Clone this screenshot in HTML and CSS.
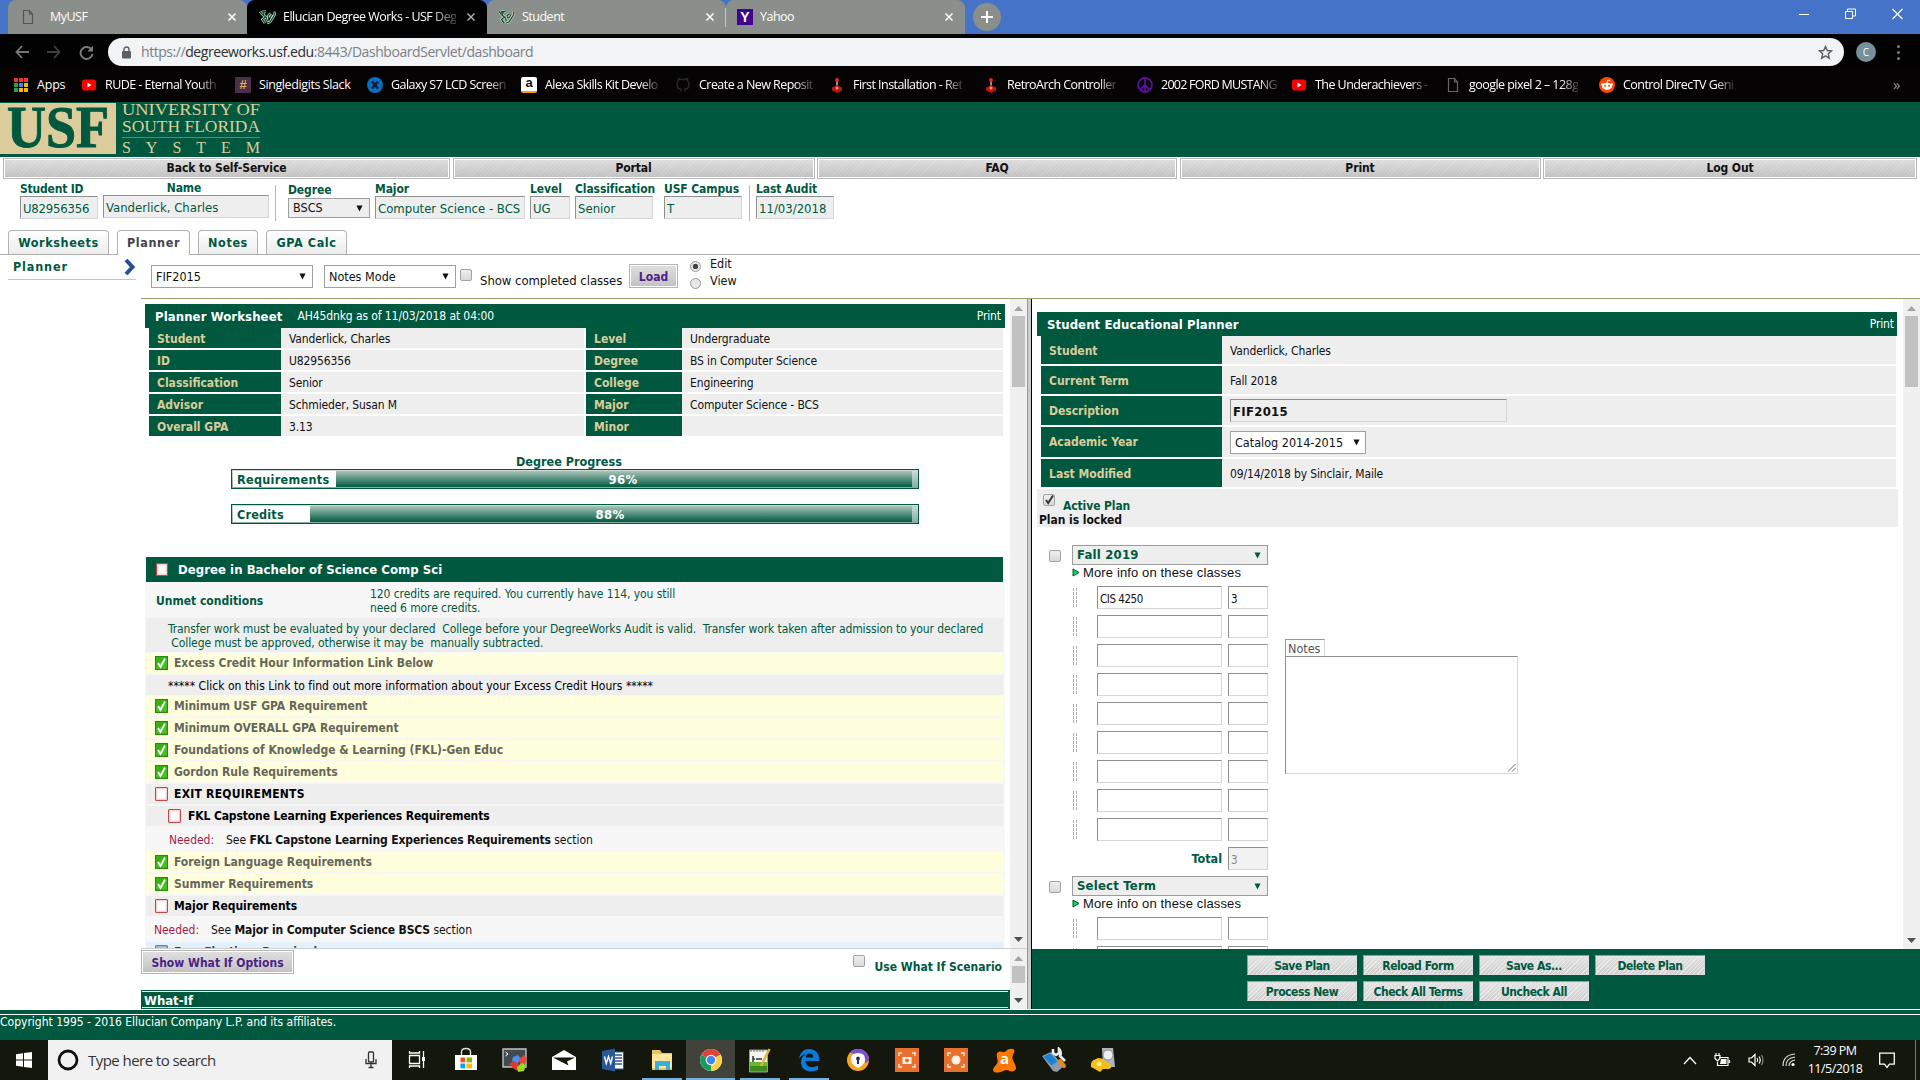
FILE: index.html
```html
<!DOCTYPE html>
<html lang="en">
<head>
<meta charset="utf-8">
<title>Ellucian Degree Works</title>
<link rel="stylesheet" href="styles.css">
</head>
<body>
<svg class="defs" width="0" height="0">
  <symbol id="bull" viewBox="0 0 17 16"><path d="M1 2.500l2.500 3M3 3l4-.5M5.500 3L4 6l2.500 2L3.500 10.500 6 14M7 8l1.500 4M8 14l3-1 4.500-7L16 2.500M10 9l-1-2 2.500-2.500M13 5.500L11 9" fill="none" stroke="#d6dccb" stroke-width="2.600"/><path d="M1 2.500l2.500 3M3 3l4-.5M5.500 3L4 6l2.500 2L3.500 10.500 6 14M7 8l1.500 4M8 14l3-1 4.500-7L16 2.500M10 9l-1-2 2.500-2.500M13 5.500L11 9" fill="none" stroke="#0b4f30" stroke-width="1.300"/></symbol>
  <symbol id="x" viewBox="0 0 10 10"><path d="M1.500 1.500l7 7M8.500 1.500l-7 7" stroke="currentColor" stroke-width="1.500"/></symbol>
  <symbol id="page" viewBox="0 0 12 16"><path d="M1.500 1.500h6l3 3.500v9.500h-9zM7.500 1.500V5h3" fill="none" stroke="currentColor" stroke-width="1.200"/></symbol>
  <symbol id="yt" viewBox="0 0 16 16"><rect x="1" y="2.500" width="14" height="11" rx="2.500" fill="#f00"/><path d="M6.500 5.500L10.500 8l-4 2.500z" fill="#fff"/></symbol>
  <symbol id="stick" viewBox="0 0 16 16"><path d="M8 4v6" stroke="#bbb" stroke-width="1.500"/><circle cx="8" cy="3" r="2" fill="#e22"/><path d="M3 10.500L8 8l5 2.500v3L8 16l-5-2.500z" fill="#b3161b"/><circle cx="8" cy="11" r="1.500" fill="#f0a030"/></symbol>
  <symbol id="ok" viewBox="0 0 13 14"><rect x=".5" y=".5" width="12" height="13" fill="#37b013" stroke="#268a0b"/><path d="M1.500 8L11.500 3v9.500h-10z" fill="#57c936" opacity=".6"/><path d="M3 7l2.500 4L10 2.500" fill="none" stroke="#fff" stroke-width="1.800"/></symbol>
  <symbol id="down" viewBox="0 0 8 7"><path d="M.5 0h7L4 7z" fill="currentColor"/></symbol>
  <symbol id="tri" viewBox="0 0 9 5"><path d="M4.500 0L9 5H0z" fill="currentColor"/></symbol>
</svg>

<div class="tabstrip">
  <div class="tab t1"><svg width="12" height="16" color="#555"><use href="#page"/></svg><span>MyUSF</span><svg class="cl" width="10" height="10"><use href="#x"/></svg></div>
  <div class="tab t2"><svg width="17" height="16"><use href="#bull"/></svg><span class="fade">Ellucian Degree Works - USF Deg</span><svg class="cl" width="10" height="10"><use href="#x"/></svg></div>
  <div class="tab t3"><svg width="17" height="16"><use href="#bull"/></svg><span>Student</span><svg class="cl" width="10" height="10"><use href="#x"/></svg></div>
  <div class="tab t4"><b class="yahoo">Y</b><span>Yahoo</span><svg class="cl" width="10" height="10"><use href="#x"/></svg></div>
  <div class="newtab"><svg width="14" height="14"><path d="M7 1v12M1 7h12" stroke="#fff" stroke-width="2"/></svg></div>
  <div class="winbtns">
    <svg width="10" height="12"><path d="M0 6.500h10" stroke="#fff"/></svg>
    <svg width="11" height="12"><path d="M.5 3.500h7v7h-7zM2.500 3V1h8v7H8" fill="none" stroke="#fff"/></svg>
    <svg width="11" height="12"><path d="M.5 1l10 10M10.500 1l-10 10" stroke="#fff" stroke-width="1.200"/></svg>
  </div>
</div>

<div class="toolbar">
  <svg width="14" height="14"><path d="M14 7H1.500M7 1L1.500 7 7 13" fill="none" stroke="#74777a" stroke-width="1.800"/></svg>
  <svg class="fwd" width="14" height="14"><path d="M0 7h12.500M7 1l5.500 6L7 13" fill="none" stroke="#3d3f41" stroke-width="1.800"/></svg>
  <svg class="rel" width="15" height="15"><path d="M12.500 4.500A6 6 0 1 0 13.500 9" fill="none" stroke="#7b7e81" stroke-width="1.900"/><path d="M14 .8v5.700H8.300z" fill="#7b7e81"/></svg>
  <div class="omni">
    <svg width="9" height="13"><rect x="0" y="5" width="9" height="7.500" rx="1" fill="#5b5f63"/><path d="M2 5V3.500a2.500 2.500 0 0 1 5 0V5" fill="none" stroke="#5b5f63" stroke-width="1.400"/></svg>
    <span class="url">https://<em>degreeworks.usf.edu</em>:8443/DashboardServlet/dashboard</span>
    <svg class="star" width="15" height="15"><path d="M7.500 1.500l1.800 4 4.200.4-3.200 2.900 1 4.400-3.800-2.300-3.800 2.300 1-4.400L1.500 5.900l4.200-.4z" fill="none" stroke="#5b5f63" stroke-width="1.400"/></svg>
  </div>
  <div class="avatar">C</div>
  <div class="dots"><i></i><i></i><i></i></div>
</div>

<div class="bookmarks">
  <div class="bm apps"><svg width="14" height="14"><path d="M0 0h4v4H0zM5 0h4v4H5zM10 0h4v4h-4z" fill="#e8392d"/><path d="M0 5h4v4H0z" fill="#2e9e4f"/><path d="M5 5h4v4H5z" fill="#3b82f0"/><path d="M10 5h4v4h-4z" fill="#f5b60d"/><path d="M0 10h4v4H0z" fill="#2e9e4f"/><path d="M5 10h4v4H5zM10 10h4v4h-4z" fill="#f5b60d"/></svg><span>Apps</span></div>
  <div class="bm"><svg width="16" height="16"><use href="#yt"/></svg><span>RUDE - Eternal Youth</span></div>
  <div class="bm short"><b class="hash">#</b><span>Singledigits Slack</span></div>
  <div class="bm"><svg width="16" height="16"><circle cx="8" cy="8" r="8" fill="#0a6ebd"/><path d="M5 4.500l6 7M11 4.500l-6 7" stroke="#06203c" stroke-width="2.600"/></svg><span>Galaxy S7 LCD Screen</span></div>
  <div class="bm"><b class="amz">a</b><span>Alexa Skills Kit Develo</span></div>
  <div class="bm"><svg width="16" height="16"><path d="M6 14.500V12C3 12 2 9.500 2 7.500S3 4 3.500 3.500V1.500L6 2.500h4l2.500-1v2C13 4 14 5.500 14 7.500S13 12 10 12v2.500" fill="none" stroke="#26282b" stroke-width="1.500"/></svg><span>Create a New Reposit</span></div>
  <div class="bm"><svg width="16" height="16"><use href="#stick"/></svg><span>First Installation - Ret</span></div>
  <div class="bm"><svg width="16" height="16"><use href="#stick"/></svg><span>RetroArch Controller</span></div>
  <div class="bm"><svg width="16" height="16"><circle cx="8" cy="8" r="7" fill="none" stroke="#5b0f9b" stroke-width="1.800"/><path d="M8 1v14M8 8l-5 5M8 8l5 5" stroke="#5b0f9b" stroke-width="1.800"/></svg><span class="tight">2002 FORD MUSTANG</span></div>
  <div class="bm"><svg width="16" height="16"><use href="#yt"/></svg><span>The Underachievers -</span></div>
  <div class="bm"><svg width="16" height="16" color="#666"><use href="#page"/></svg><span>google pixel 2 – 128g</span></div>
  <div class="bm"><svg width="16" height="16"><circle cx="8" cy="8" r="8" fill="#ff4500"/><ellipse cx="8" cy="9.300" rx="5" ry="3.600" fill="#fff"/><circle cx="3.500" cy="7.500" r="1.300" fill="#fff"/><circle cx="12.500" cy="7.500" r="1.300" fill="#fff"/><path d="M8 6l.7-3 2.300.5" fill="none" stroke="#fff"/><circle cx="6" cy="8.800" r="1" fill="#ff4500"/><circle cx="10" cy="8.800" r="1" fill="#ff4500"/></svg><span>Control DirecTV Geni</span></div>
  <div class="more">»</div>
</div>

<div class="banner">
  <svg width="262" height="55" class="logo">
    <rect x="0" y="1" width="116" height="51" fill="#dccc9b"/>
    <text x="7" y="45" textLength="102" lengthAdjust="spacingAndGlyphs" font-size="59" font-weight="bold" fill="#00593f" stroke="#00593f">USF</text>
    <g fill="#dccc9b" font-size="17.500">
      <text x="122" y="13" textLength="138" lengthAdjust="spacingAndGlyphs">UNIVERSITY OF</text>
      <text x="122" y="30" textLength="138" lengthAdjust="spacingAndGlyphs">SOUTH FLORIDA</text>
      <text x="122" y="51" font-size="16" textLength="138">SYSTEM</text>
    </g>
    <path d="M122 35.500h138" stroke="#5c8b62"/>
  </svg>
</div>

<div class="menubar"><a class="stripe">Back to Self-Service</a><a class="stripe">Portal</a><a class="stripe">FAQ</a><a class="stripe">Print</a><a class="stripe">Log Out</a></div>

<div class="student">
  <div class="f f-id"><label>Student ID</label><div class="in">U82956356</div></div>
  <div class="f f-name"><label>Name</label><div class="in">Vanderlick, Charles</div></div>
  <div class="rule"></div>
  <div class="f f-deg"><label>Degree</label><div class="sel">BSCS<svg width="7" height="7"><use href="#down"/></svg></div></div>
  <div class="f f-maj"><label>Major</label><div class="in">Computer Science - BCS</div></div>
  <div class="f f-lev"><label>Level</label><div class="in">UG</div></div>
  <div class="f f-cls"><label>Classification</label><div class="in">Senior</div></div>
  <div class="f f-cam"><label>USF Campus</label><div class="in">T</div></div>
  <div class="rule r2"></div>
  <div class="f f-aud"><label>Last Audit</label><div class="in">11/03/2018</div></div>
</div>

<div class="apptabs"><a class="w1">Worksheets</a><a class="w2 on">Planner</a><a class="w3">Notes</a><a class="w4">GPA Calc</a></div>

<div class="work">
  <div class="side"><div class="sideitem"><span>Planner</span><svg width="12" height="16"><path d="M2 1l6.500 7L2 15" fill="none" stroke="#26508f" stroke-width="4"/></svg></div></div>
  <div class="content">
    <div class="controls">
      <div class="sel s1">FIF2015<svg width="7" height="7"><use href="#down"/></svg></div>
      <div class="sel s2">Notes Mode<svg width="7" height="7"><use href="#down"/></svg></div>
      <i class="cb"></i><span class="scc">Show completed classes</span>
      <a class="btn stripe load">Load</a>
      <div class="radios"><div><i class="rad on"></i>Edit</div><div><i class="rad"></i>View</div></div>
    </div>
    <div class="frames">
      <div class="leftcol">
        <div class="ws">
          <div class="wsbody">
            <div class="bar"><b>Planner Worksheet</b><span>AH45dnkg as of 11/03/2018 at 04:00</span><span class="pr">Print</span></div>
            <div class="info">
              <b>Student</b><span>Vanderlick, Charles</span><b>Level</b><span>Undergraduate</span>
              <b>ID</b><span>U82956356</span><b>Degree</b><span>BS in Computer Science</span>
              <b>Classification</b><span>Senior</span><b>College</b><span>Engineering</span>
              <b>Advisor</b><span>Schmieder, Susan M</span><b>Major</b><span>Computer Science - BCS</span>
              <b>Overall GPA</b><span>3.13</span><b>Minor</b><span></span>
            </div>
            <div class="dp">Degree Progress</div>
            <div class="prog"><span class="pl req">Requirements</span><span class="pf">96%</span></div>
            <div class="prog"><span class="pl crd">Credits</span><span class="pf">88%</span></div>
            <div class="audit">
              <div class="ah"><i class="no"></i>Degree in Bachelor of Science Comp Sci</div>
              <div class="unmet"><b>Unmet conditions</b><p>120 credits are required. You currently have 114, you still<br>need 6 more credits.</p></div>
              <div class="transfer">Transfer work must be evaluated by your declared&nbsp; College before your DegreeWorks Audit is valid.&nbsp; Transfer work taken after admission to your declared<br>&nbsp;College must be approved, otherwise it may be&nbsp; manually subtracted.</div>
              <div class="row y"><svg><use href="#ok"/></svg>Excess Credit Hour Information Link Below</div>
              <div class="row g link">***** Click on this Link to find out more information about your Excess Credit Hours *****</div>
              <div class="row y n1"><svg><use href="#ok"/></svg>Minimum USF GPA Requirement</div>
              <div class="row y"><svg><use href="#ok"/></svg>Minimum OVERALL GPA Requirement</div>
              <div class="row y"><svg><use href="#ok"/></svg>Foundations of Knowledge &amp; Learning (FKL)-Gen Educ</div>
              <div class="row y"><svg><use href="#ok"/></svg>Gordon Rule Requirements</div>
              <div class="row g wide"><i class="no"></i>EXIT REQUIREMENTS</div>
              <div class="row g sub"><i class="no"></i>FKL Capstone Learning Experiences Requirements</div>
              <div class="need n2"><em>Needed:</em>See&nbsp;<b>FKL Capstone Learning Experiences Requirements</b>&nbsp;section</div>
              <div class="row y n0"><svg><use href="#ok"/></svg>Foreign Language Requirements</div>
              <div class="row y"><svg><use href="#ok"/></svg>Summer Requirements</div>
              <div class="row g"><i class="no"></i>Major Requirements</div>
              <div class="need"><em>Needed:</em>See&nbsp;<b>Major in Computer Science BSCS</b>&nbsp;section</div>
              <div class="row bl"><i class="no ip"></i>Free Electives Required</div>
            </div>
          </div>
          <div class="sb"><svg width="9" height="5" color="#a3a3a3"><use href="#tri"/></svg><i class="th"></i><svg class="dn" width="9" height="5" color="#505050"><use href="#tri"/></svg></div>
        </div>
        <div class="whatif">
          <div class="wibody">
            <div class="witop"><a class="btn stripe">Show What If Options</a><span class="usew"><i class="cb"></i>Use What If Scenario</span></div>
            <div class="wibar">What-If</div>
          </div>
          <div class="sb"><svg width="9" height="5" color="#a3a3a3"><use href="#tri"/></svg><i class="th small"></i><svg class="dn" width="9" height="5" color="#505050"><use href="#tri"/></svg></div>
        </div>
      </div>
      <div class="split"></div>
      <div class="rightcol">
        <div class="pl-wrap">
          <div class="planner">
            <div class="bar"><b>Student Educational Planner</b><span class="pr">Print</span></div>
            <div class="pinfo">
              <b>Student</b><span>Vanderlick, Charles</span>
              <b>Current Term</b><span>Fall 2018</span>
              <b>Description</b><span><i class="in desc">FIF2015</i></span>
              <b>Academic Year</b><span><i class="sel cat">Catalog 2014-2015<svg width="7" height="7"><use href="#down"/></svg></i></span>
              <b>Last Modified</b><span>09/14/2018 by Sinclair, Maile</span>
            </div>
            <div class="active"><div><i class="cb ck"><svg width="12" height="12"><path d="M3 6l2.200 3L10 1.500" fill="none" stroke="#333" stroke-width="2"/></svg></i><b>Active Plan</b></div><strong>Plan is locked</strong></div>
            <div class="term">
              <i class="cb"></i>
              <div class="tcol">
                <div class="tsel">Fall 2019<svg width="7" height="7"><use href="#down"/></svg></div>
                <div class="mi"><svg width="8" height="9"><path d="M1 1l6 3.500L1 8z" fill="#00e060" stroke="#04502c"/></svg>More info on these classes</div>
                <div class="cr"><i></i><u>CIS 4250</u><u>3</u></div>
                <div class="cr"><i></i><u></u><u></u></div>
                <div class="cr"><i></i><u></u><u></u></div>
                <div class="cr"><i></i><u></u><u></u></div>
                <div class="cr"><i></i><u></u><u></u></div>
                <div class="cr"><i></i><u></u><u></u></div>
                <div class="cr"><i></i><u></u><u></u></div>
                <div class="cr"><i></i><u></u><u></u></div>
                <div class="cr"><i></i><u></u><u></u></div>
                <div class="cr tot"><b>Total</b><u class="dis">3</u></div>
              </div>
              <div class="notes"><span>Notes</span><div class="ta"><svg width="9" height="9"><path d="M1 8.500L8.500 1M5 8.500L8.500 5" stroke="#555" stroke-width=".9"/></svg></div></div>
            </div>
            <div class="term t-2">
              <i class="cb"></i>
              <div class="tcol">
                <div class="tsel">Select Term<svg width="7" height="7"><use href="#down"/></svg></div>
                <div class="mi"><svg width="8" height="9"><path d="M1 1l6 3.500L1 8z" fill="#00e060" stroke="#04502c"/></svg>More info on these classes</div>
                <div class="cr"><i></i><u></u><u></u></div>
                <div class="cr"><i></i><u></u><u></u></div>
              </div>
            </div>
          </div>
          <div class="sb"><svg width="9" height="5" color="#a3a3a3"><use href="#tri"/></svg><i class="th"></i><svg class="dn" width="9" height="5" color="#505050"><use href="#tri"/></svg></div>
        </div>
        <div class="actions">
          <a class="stripe">Save Plan</a><a class="stripe">Reload Form</a><a class="stripe">Save As...</a><a class="stripe">Delete Plan</a>
          <a class="stripe">Process New</a><a class="stripe">Check All Terms</a><a class="stripe">Uncheck All</a>
        </div>
      </div>
    </div>
  </div>
</div>

<div class="foot"><div></div><p>Copyright 1995 - 2016 Ellucian Company L.P. and its affiliates.</p></div>

<div class="taskbar">
  <div class="start"><svg width="16" height="16"><path d="M0 2.200l7-1v6.300H0zM8 1l8-1v7.500H8zM0 8.500h7v6.300l-7-1zM8 8.500h8V16l-8-1z" fill="#fff"/></svg></div>
  <div class="search"><svg width="22" height="22"><circle cx="11" cy="11" r="9" fill="none" stroke="#111" stroke-width="2.800"/></svg><span>Type here to search</span><svg class="mic" width="12" height="18"><rect x="3.500" y="1" width="5" height="10" rx="1" fill="none" stroke="#333" stroke-width="1.300"/><path d="M1 8v4.500h10V8M6 12.500V16M3.500 16.500h5" fill="none" stroke="#333" stroke-width="1.300"/></svg></div>
  <div class="ti"><svg width="18" height="18"><path d="M1.500 4.500h10v8h-10zM1.500 0v2h10V0M1.500 17v-2h10v2M15.500 0v17" fill="none" stroke="#fff" stroke-width="1.300"/><path d="M14 6h3v4h-3z" fill="#fff"/></svg></div>
  <div class="ti"><svg width="24" height="26"><path d="M1 8h22v15H1z" fill="#fff"/><path d="M7.500 8V5q0-3.500 4.500-3.500T16.500 5v3" fill="none" stroke="#ddd" stroke-width="1.400"/><path d="M6.500 10.500H11v4.800H6.500z" fill="#f25022"/><path d="M12.500 10.500H18v4.800h-5.500z" fill="#7fba00"/><path d="M6.500 16.500H11v4.800H6.500z" fill="#00a4ef"/><path d="M12.500 16.500H18v4.800h-5.500z" fill="#ffb900"/></svg></div>
  <div class="ti"><svg width="26" height="26"><path d="M1 2h23v18H1z" fill="#444b50" stroke="#bfc3c6" stroke-width="1.400"/><path d="M3.500 5l2.500 2-2.500 2" stroke="#fff" fill="none"/><path d="M11 10l5-2 3 4-4 5-5-3z" fill="#4a8ef0"/><path d="M17 12l5-4 3 4-2 5-5 0z" fill="#e64a3b"/><path d="M7 17l5-3 5 3-1 7-4-2z" fill="#e0392c"/><path d="M15 20l5-4 4 2-2 6-6 1z" fill="#9bd822"/></svg></div>
  <div class="ti"><svg width="26" height="22"><path d="M1 8L13 1l12 7v13H1z" fill="#fff"/><path d="M2 8.500h22l-8 4 1.500 4L2 8.500z" fill="#14170b"/></svg></div>
  <div class="ti"><svg width="24" height="24"><path d="M12 4h10.500v17H12z" fill="#fff" stroke="#2b579a"/><path d="M14 7h7M14 10h7M14 13h7M14 16h7" stroke="#2b579a" stroke-width="1.300"/><path d="M1 3l13-2.500v23L1 21z" fill="#2b579a"/><path d="M3.500 8.500L5.300 15.500 7.500 8.500l2.200 7 1.800-7" fill="none" stroke="#fff" stroke-width="1.400"/></svg></div>
  <div class="ti run"><svg width="24" height="22"><path d="M2 1h8l2 3h10v17H2z" fill="#e9c35c"/><path d="M2 5h20v14H2z" fill="#ffe69a"/><path d="M5 21v-9h15v9h-4v-4H9v4z" fill="#38aee6"/></svg></div>
  <div class="ti run cur"><svg width="24" height="24" viewBox="0 0 24 24"><circle cx="12" cy="12" r="11" fill="#fff"/><path d="M12 12L2.500 6.500A11 11 0 0 1 21.500 6.500z" fill="#db4437"/><path d="M12 12l9.500-5.500A11 11 0 0 1 12 23z" fill="#fdd04a"/><path d="M12 12v11A11 11 0 0 1 2.500 6.500z" fill="#1a9d5a"/><circle cx="12" cy="12" r="5.300" fill="#fff"/><circle cx="12" cy="12" r="4.200" fill="#4285f4"/></svg></div>
  <div class="ti run"><svg width="24" height="25"><path d="M1.500 2h18v22h-18z" fill="#f4f6f2" stroke="#999"/><path d="M2 14h17v9.500H2z" fill="#6db52f"/><path d="M2 18h17v5.500H2z" fill="#3f8a1c"/><path d="M5 8v6M8 11h6M5 11h2" stroke="#333" stroke-width="1.500"/><path d="M21.500 1L13 18" stroke="#e8b13c" stroke-width="2.500"/><path d="M3 2v2M6 2v2M9 2v2M12 2v2M15 2v2" stroke="#777"/></svg></div>
  <div class="ti run"><svg width="22" height="24"><path d="M1 11C2 4 6 1 11 1c6 0 10 4 10 9v3H7.500c.3 4 3 6 6.500 6 2.500 0 4.500-.6 6-1.500v4.300C18 23 15.500 23.500 13 23.500 7 23.500 3 20 3 14c0-3.500 2-6.500 5-8C4.500 6.500 2 8.500 1 11zM7.700 9.500h7.500c0-2.500-1.200-4-3.600-4S8 7.200 7.700 9.500z" fill="#0a7bdc"/></svg></div>
  <div class="ti"><svg width="24" height="24"><circle cx="12" cy="12" r="11" fill="#f5a623"/><path d="M4 4.500A11 11 0 0 1 23 12c-1 2-3 3-4 3 1-5-3-9-9-8z" fill="#7a4fd6"/><path d="M12 5q7 0 7 6t-7 9q-7-3-7-9t7-6z" fill="#fff"/><path d="M12 8.500a2 2 0 0 1 1 3.700V16h-2v-3.800a2 2 0 0 1 1-3.700z" fill="#2a2a55"/></svg></div>
  <div class="ti"><svg width="24" height="24"><path d="M0 0h24v24H0z" fill="#e8702f"/><path d="M4 8V5h3M17 5h3v3M20 16v3h-3M7 19H4v-3" fill="none" stroke="#ffe3cf" stroke-width="1.500"/><path d="M7.500 9h9v7h-9z" fill="#fff2e6"/><circle cx="12" cy="12.500" r="2" fill="#e8702f"/></svg></div>
  <div class="ti"><svg width="24" height="24"><path d="M0 0h24v24H0z" fill="#e8702f"/><path d="M4 8V5h3M17 5h3v3M20 16v3h-3M7 19H4v-3" fill="none" stroke="#ffe3cf" stroke-width="1.500"/><circle cx="12" cy="12" r="4.500" fill="#fff2e6"/></svg></div>
  <div class="ti avast"><svg width="25" height="25"><path d="M16 1.500c3-1.500 7-.5 6.500 2-.5 2-2.500 4-2 7 .4 3 3.500 6 3.500 9.500 0 3-4.500 4.500-7.500 2.500-2.500-1.500-5 .5-8 1.500-4 1.200-7.500.5-7.500-2 0-2.500 3.500-4.500 4.500-7.500.8-3-1.500-6-.5-9 1-2.500 4-2.500 6-1.500 2 .8 3-1.500 5-2.500z" fill="#ff7800"/></svg><b>a</b></div>
  <div class="ti"><svg width="26" height="26"><path d="M1 9l9-4 13 14-7 6-4-1z" fill="#8f9ba6"/><path d="M2.500 9.500l7-3 7 8-6 4z" fill="#1683d8"/><path d="M12 2v4l3 2 3-2V2q3 3 1 7l5 5" stroke="#e9edf0" stroke-width="2.600" fill="none"/><path d="M19 14l4 5" stroke="#e88a1c" stroke-width="4" stroke-linecap="round"/></svg></div>
  <div class="ti"><svg width="26" height="26"><path d="M12 1h11l2 19H13z" fill="#aeb4ba"/><circle cx="18" cy="8" r="5" fill="#eef0f2" stroke="#8a9097"/><path d="M1 20q-1-7 5-8l2-1q5 0 7 3l5 3q3 4-1 5l-6 0-3 3-7-4z" fill="#f2bf1d"/><circle cx="9" cy="17" r="2.500" fill="#fde68a"/></svg></div>
  <div class="tray">
    <svg width="14" height="9"><path d="M1 8l6-6.500L13 8" fill="none" stroke="#fff" stroke-width="1.400"/></svg>
    <svg width="17" height="14"><path d="M5 4.500h9v8H3.500V9M15.500 7v3M1 2.500h5v3L3.500 8 1 5.500zM2 0v2M5 0v2" fill="none" stroke="#fff" stroke-width="1.200"/><path d="M7 6h5.500v5H6z" fill="#fff"/></svg>
    <svg width="17" height="14"><path d="M1 5h2.500L7 1.500v11L3.500 9H1z" fill="none" stroke="#fff" stroke-width="1.200"/><path d="M9 5q1.500 2 0 4M11 3.500q2.500 3.500 0 7" fill="none" stroke="#fff" stroke-width="1.200"/><path d="M13.500 2q3 5 0 10" fill="none" stroke="#888" stroke-width="1.200"/></svg>
    <svg class="wifi" width="14" height="14"><path d="M1 13Q1 2 13 1M4 13q0-8 9-9M7 13q0-5 6-6" fill="none" stroke="#ddd" stroke-width="1.200"/><circle cx="11" cy="11.500" r="1.600" fill="#fff"/></svg>
    <div class="clock">7:39 PM<br>11/5/2018</div>
    <svg class="nt" width="16" height="17"><path d="M.7 1.200h14.600v11H10.500L8 15.500 5.500 12.200H.7z" fill="none" stroke="#fff" stroke-width="1.300"/></svg>
    <i class="desk"></i>
  </div>
</div>
</body>
</html>
```
FILE: styles.css
```css
* { box-sizing: border-box; }
html, body { margin: 0; height: 1080px; overflow: hidden; }
body { background: #fff; font: 12px/14px "DejaVu Sans Condensed", "DejaVu Sans", sans-serif; color: #111; white-space: nowrap; width: 1920px; }
p { margin: 0; }
i, em { font-style: normal; }
u { text-decoration: none; }
svg { display: block; flex: none; }
.defs { position: absolute; }

/* browser chrome */
.tabstrip, .toolbar, .bookmarks, .taskbar { font-family: "Open Sans", "Noto Sans", sans-serif; }
.tabstrip { display: flex; height: 34px; background: #4473c8; padding-left: 8px; }
.tab { display: flex; align-items: center; height: 34px; background: #8a8f8b; color: #fff; border-radius: 8px 8px 0 0; font-size: 12.500px; letter-spacing: -.5px; }
.tab span { margin-left: 7px; }
.cl { margin-left: auto; }
.t1 { width: 239px; padding: 0 10px 0 14px; }
.t1 span { margin-left: 16px; }
.t2 { width: 240px; background: #030202; padding: 0 11px 0 12px; }
.t2 .cl { color: #aaa; }
.t3 { width: 239px; padding: 0 11px; }
.t4 { width: 239px; padding: 0 11px; position: relative; }
.t4::before { content: ""; position: absolute; left: -1px; top: 8px; width: 1px; height: 19px; background: #c6c9c6; }
.fade { -webkit-mask-image: linear-gradient(90deg, #000 84%, #0004); mask-image: linear-gradient(90deg, #000 84%, #0004); }
.yahoo { width: 16px; height: 16px; background: #400090; color: #fff; font: bold 14px/16px "Liberation Sans", sans-serif; text-align: center; letter-spacing: 0; }
.newtab { width: 28px; height: 28px; border-radius: 50%; background: #8a8f8b; margin: 3px 0 0 8px; display: grid; place-items: center; }
.winbtns { display: flex; gap: 36px; margin-left: auto; padding: 8px 17px 0 0; }
.toolbar { display: flex; align-items: center; height: 34px; background: #030202; padding: 4px 20px 2px 15px; }
.fwd { margin-left: 18px; }
.rel { margin-left: 18px; }
.omni { display: flex; align-items: center; width: 1736px; height: 28px; border-radius: 14px; background: #f1f3f4; margin-left: 14px; padding: 0 11px 0 14px; }
.url { margin-left: 10px; font-size: 14px; letter-spacing: -.44px; color: #7c8085; }
.url em { color: #2b2d30; }
.star { margin-left: auto; }
.avatar { width: 20px; height: 20px; border-radius: 50%; background: #78909c; color: #fff; font-size: 10px; line-height: 20px; text-align: center; margin-left: 12px; }
.dots { margin-left: auto; display: grid; gap: 3px; }
.dots i { width: 3px; height: 3px; border-radius: 50%; background: #7b7e81; }
.bookmarks { display: flex; align-items: center; height: 34px; background: #050303; color: #fff; font-size: 12.500px; letter-spacing: -.55px; padding-bottom: 1px; }
.bm { display: flex; align-items: center; gap: 8px; width: 137px; margin-right: 17px; }
.bm span { -webkit-mask-image: linear-gradient(90deg, #000 84%, #0003); mask-image: linear-gradient(90deg, #000 84%, #0003); line-height: 18px; }
.bm .tight { letter-spacing: -.75px; }
.bm.apps { width: 66px; padding-left: 14px; margin-right: 15px; letter-spacing: -.2px; }
.bm.apps span, .bm.short span { -webkit-mask: none; mask: none; }
.bm.apps span { margin-left: 1px; }
.bm.short { width: 116px; margin-right: 16px; letter-spacing: -.4px; }
.hash, .amz { width: 16px; height: 16px; font: bold 13px/16px "Liberation Sans", sans-serif; text-align: center; letter-spacing: 0; }
.hash { background: #4b2f4b; color: #d9b45a; }
.amz { background: #fff; color: #111; border-radius: 2px; line-height: 12px; border-bottom: 2px solid #f79b1e; }
.more { margin-left: auto; padding: 0 20px 2px 0; color: #999; font-size: 15px; }

/* university banner and menu */
.banner { height: 55px; background: #00593f; }
.logo { font-family: "Liberation Serif", serif; }
.stripe { background: repeating-linear-gradient(135deg, rgba(255,255,255,.13) 0 1px, transparent 1px 3px), linear-gradient(#dedede, #bfbfbf); }
.menubar { display: grid; grid-template-columns: 447px 362px 360px 361px 374px; padding: 1px 0 0 3px; height: 23px; column-gap: 2.500px; }
.menubar a { height: 21px; border: 1px solid #b9b9b9; box-shadow: inset 0 0 0 1px #fff; text-align: center; font-weight: bold; line-height: 18px; letter-spacing: -.1px; }

/* student summary */
.student { display: flex; height: 50px; padding-left: 20px; color: #00593f; }
.f label { display: block; font-weight: bold; line-height: 13px; height: 13px; letter-spacing: -.1px; }
.f { padding-top: 3px; }
.in { display: block; border: 1px solid; border-color: #8f8f8f #d6d6d6 #d6d6d6 #8f8f8f; background: #eee; height: 23px; line-height: 24px; padding-left: 2px; font-size: 13px; letter-spacing: 0; }
.sel { display: flex; align-items: center; justify-content: space-between; border: 1px solid #a0a0a0; background: #fff; color: #111; padding: 0 6px 0 4px; font-size: 12.500px; height: 23px; line-height: 23px; }
.f-id { width: 78px; }
.f-id label { letter-spacing: -.2px; }
.f-id .in { letter-spacing: -.2px; }
.f-name { width: 166px; margin-left: 5px; padding-top: 2px; }
.f-name label { padding-right: 4px; text-align: center; line-height: 12px; }
.rule { width: 1px; height: 36px; margin: 5px 12px 0 6px; background: #b8b8b8; }
.f-deg { width: 82px; padding-top: 4px; }
.f-deg label { height: 14px; }
.f-deg .sel { background: #eee; height: 20px; line-height: 20px; }
.f-maj { width: 150px; margin-left: 5px; }
.f-lev { width: 40px; margin-left: 5px; }
.f-cls { width: 84px; margin-left: 5px; }
.f-cls .in { width: 78px; }
.f-cam { width: 78px; margin-left: 5px; }
.rule.r2 { margin: 5px 6px 0 7px; }
.f-aud { width: 78px; }

.apptabs { display: flex; height: 25px; padding-left: 8px; border-bottom: 1px solid #aeaeae; }
.apptabs a { height: 24px; border: 1px solid #b3b3b3; border-bottom: 0; border-radius: 4px 4px 0 0; background: linear-gradient(#fff, #ececec); color: #00593f; font-weight: bold; font-size: 12.500px; line-height: 24px; text-align: center; letter-spacing: .6px; margin-right: 8px; }
.apptabs .on { height: 25px; background: #fff; color: #44444c; }
.w1 { width: 101px; } .w2 { width: 73px; } .w3 { width: 60px; } .w4 { width: 81px; }

/* work area */
.work { display: flex; height: 754px; }
.side { width: 141px; padding-left: 8px; }
.sideitem { display: flex; align-items: center; justify-content: space-between; width: 128px; height: 25px; border-bottom: 1px solid #c4c4c4; padding-left: 5px; color: #00593f; font-weight: bold; font-size: 12.500px; letter-spacing: .85px; }
.content { width: 1779px; }
.controls { display: flex; height: 44px; border-bottom: 1px solid #999d6c; padding-left: 10px; }
.s1, .s2 { margin-top: 10px; line-height: 24px; }
.s1 { width: 162px; }
.s2 { width: 132px; margin-left: 11px; }
.cb { display: block; flex: none; width: 12px; height: 12px; border: 1px solid #a2a2a2; border-radius: 2px; background: linear-gradient(#eee, #d9d9d9); }
.controls .cb { margin: 14px 0 0 4px; }
.scc { margin: 19px 0 0 8px; font-size: 13px; width: 149px; letter-spacing: -.05px; }
.btn { display: block; border: 1px solid #b5b5b5; box-shadow: inset 0 0 0 1px #fff; color: #4f1f86; font-weight: bold; text-align: center; }
.load { width: 49px; height: 24px; margin-top: 9px; line-height: 24px; }
.radios { margin: 0 0 0 12px; font-size: 12.500px; }
.radios div { display: flex; align-items: center; height: 17px; line-height: 15px; }
.rad { width: 11px; height: 11px; border: 1px solid #9a9a9a; border-radius: 50%; background: #e6e6e6; margin: 5px 9px 0 0; }
.rad.on { background: radial-gradient(circle, #444 0 2.500px, #e6e6e6 3px); }
.frames { display: flex; height: 710px; }
.leftcol { width: 886px; }
.ws { display: flex; height: 650px; border-bottom: 1px solid #cfcfcf; }
.wsbody { width: 869px; height: 649px; overflow: hidden; padding: 5px 5px 0 4px; }
.sb { width: 17px; background: #f0f0f0; display: flex; flex-direction: column; align-items: center; padding-top: 7px; }
.th { width: 13px; height: 71px; background: #c1c1c1; margin-top: 5px; }
.th.small { height: 17px; }
.sb .dn { margin-top: auto; margin-bottom: 6px; transform: rotate(180deg); }
.bar { display: flex; height: 24px; background: #00593f; color: #fff; padding: 0 4px 0 10px; line-height: 25px; letter-spacing: -.1px; }
.bar b { font-size: 13px; letter-spacing: .1px; margin-right: 15px; }
.pr { margin-left: auto; }
.info { display: grid; grid-template-columns: 132px 305px 96px 321px; grid-auto-rows: 20px; row-gap: 2px; padding-left: 4px; line-height: 22px; }
.info b { background: #00593f; color: #dccc9b; padding-left: 8px; }
.info span { background: #eee; padding-left: 8px; letter-spacing: -.12px; }
.info span:nth-child(4n+2) { width: 303px; }
.dp { margin: 19px 0 0 371px; font-weight: bold; font-size: 12.500px; color: #00593f; }
.prog { display: flex; width: 688px; height: 20px; margin: 0 0 15px 86px; border: 1px solid #00593f; padding: 1px 6px 1px 1px; background: linear-gradient(#cfdcd6, #86ada0); font-weight: bold; }
.pl { background: #fff; color: #00593f; padding-left: 4px; line-height: 17px; font-size: 12.500px; }
.req { width: 103px; letter-spacing: .3px; } .crd { width: 77px; letter-spacing: .2px; }
.pf { flex: 1; background: linear-gradient(#a9c4bb, #005a40); color: #fff; text-align: center; line-height: 17px; font-size: 13px; letter-spacing: .4px; padding-right: 2px; }
.audit { margin-top: 33px; padding-right: 2px; background: #f7f7f7; width: 860px; border-left: 1px solid #f7f7f7; }
.ah { display: flex; align-items: center; height: 25px; background: #00593f; color: #fff; font-weight: bold; font-size: 13px; padding-left: 10px; gap: 10px; letter-spacing: .05px; }
.no { width: 12px; height: 13px; border: 1px solid #c2494d; border-radius: 1px; background: #fff; box-shadow: inset 0 0 2px 1px #f0c4c4; flex: none; }
.ip { border-color: #5f86a8; box-shadow: inset 0 0 2px 2px #9ab4cc; }
.unmet { display: flex; height: 36px; color: #00593f; padding: 5px 0 0 10px; }
.unmet b { width: 214px; line-height: 28px; font-size: 12px; }
.unmet p { letter-spacing: -.08px; }
.transfer { background: #eee; height: 34px; color: #00593f; padding: 4px 0 0 22px; letter-spacing: -.095px; }
.row { display: flex; align-items: center; height: 20px; margin-top: 2px; padding-left: 9px; font-weight: bold; font-size: 12px; gap: 6px; overflow: hidden; letter-spacing: -.02px; }
.row svg { width: 13px; height: 14px; }
.transfer + .row, .row.n1 { margin-top: 1px; }
.row .no { width: 13px; height: 14px; }
.y { background: #ffffdd; color: #66665a; }
.g { background: #eee; color: #000; }
.row.link { padding-left: 22px; font-weight: normal; letter-spacing: .035px; padding-top: 2px; }
.row.sub { padding-left: 22px; gap: 7px; letter-spacing: -.12px; }
.row.wide { letter-spacing: .25px; }
.need { display: flex; align-items: center; height: 26px; padding: 2px 0 0 8px; letter-spacing: -.05px; }
.need.n2 { padding-left: 23px; }
.need b { letter-spacing: -.12px; }
.need em { color: #a81c44; margin-right: 12px; }
.n0 { margin-top: 0; }
.bl { background: #e3f1fd; margin-top: 0; color: #345; }

.whatif { display: flex; height: 60px; }
.wibody { width: 869px; }
.witop { display: flex; justify-content: space-between; height: 41px; padding: 1px 8px 0 0; }
.witop .btn { width: 153px; height: 24px; line-height: 24px; }
.usew { display: flex; color: #00593f; font-weight: bold; gap: 10px; padding-top: 10px; }
.usew .cb { margin-top: -5px; }
.wibar { height: 19px; color: #fff; font-weight: bold; font-size: 13px; line-height: 21px; padding-left: 3px; background: linear-gradient(#fff, #fff) 1px 1px / 866px 1px no-repeat, linear-gradient(#dfe8e4, #dfe8e4) 1px 17px / 866px 1px no-repeat, #00593f; }

.split { width: 5px; border-left: 1px solid #989898; border-right: 1px solid #000; background: #ccc; }
.rightcol { width: 888px; }
.pl-wrap { display: flex; height: 650px; overflow: hidden; }
.planner { width: 871px; padding: 13px 6px 0 5px; }
.planner .bar { padding: 0 3px 0 10px; }
.pinfo { display: grid; grid-template-columns: 181px 674px; grid-template-rows: 28px 28px 29px 30px 28px; row-gap: 2px; padding-left: 4px; line-height: 30px; }
.pinfo b { background: #00593f; color: #dccc9b; padding-left: 8px; letter-spacing: 0; }
.pinfo span { background: #eee; padding-left: 8px; letter-spacing: -.15px; }
.desc { width: 277px; margin-top: 3px; font-weight: bold; letter-spacing: .3px; }
.cat { width: 136px; margin-top: 4px; line-height: 24px; padding-right: 5px; letter-spacing: 0; }
.active { height: 38px; background: #eee; margin-top: 2px; padding-left: 2px; width: 861px; }
.active div { display: flex; height: 24px; padding: 5px 0 0 4px; gap: 8px; }
.active b { color: #00593f; padding-top: 5px; letter-spacing: -.1px; }
.active strong { display: block; letter-spacing: -.05px; line-height: 15px; }
.ck svg { margin: -1px 0 0 -1px; }
.term { display: flex; padding: 18px 0 0 12px; align-items: flex-start; }
.term .cb { margin: 5px 11px 0 0; }
.tcol { width: 196px; }
.tsel { display: flex; align-items: center; justify-content: space-between; height: 20px; border: 1px solid #9c9c9c; background: #eee; color: #00593f; font-weight: bold; font-size: 13px; line-height: 20px; letter-spacing: .2px; padding: 0 6px 0 4px; }
.mi { display: flex; align-items: center; gap: 3px; height: 14px; font: 13px/15px "Liberation Sans", sans-serif; letter-spacing: .13px; margin-bottom: 7px; padding-top: 1px; }
.cr { display: flex; height: 23px; margin-bottom: 6px; }
.cr i { width: 4px; height: 19px; margin: 2px 20px 0 1px; background: repeating-linear-gradient(transparent 0 3px, #fff 3px 4px), linear-gradient(90deg, #b0b0b0 0 1px, #fff 1px 3px, #b0b0b0 3px 4px); }
.cr u { border: 1px solid; border-color: #8f8f8f #d6d6d6 #d6d6d6 #8f8f8f; width: 125px; margin-right: 6px; padding-left: 2px; line-height: 24px; font-size: 11.500px; letter-spacing: -.45px; }
.cr u:last-child { width: 40px; margin: 0; }
.cr .dis { background: #f2f2f2; color: #888; }
.tot { margin: 0; }
.tot b { width: 150px; margin-right: 6px; text-align: right; color: #00593f; font-size: 12.500px; line-height: 23px; }
.notes { margin: 94px 0 0 17px; }
.notes span { display: block; width: 40px; height: 17px; border: 1px solid; border-color: #999 #d6d6d6 #fff #999; border-bottom: 0; color: #555; line-height: 18px; padding-left: 2px; font-size: 12.500px; }
.ta { display: flex; align-items: flex-end; justify-content: flex-end; width: 233px; height: 118px; border: 1px solid; border-color: #8f8f8f #d6d6d6 #d6d6d6 #8f8f8f; padding: 1px; }
.t-2 { padding-top: 6px; }
.actions { display: grid; grid-template-columns: repeat(4, 110px); grid-auto-rows: 20px; gap: 6px; height: 60px; background: #00593f; padding: 6px 0 0 215px; }
.actions a { border: 1px solid; border-color: #999 #ddd #ddd #999; color: #00593f; font-weight: bold; font-size: 12px; letter-spacing: -.45px; text-align: center; line-height: 20px; background: repeating-linear-gradient(135deg, #e9e9e9 0 1px, transparent 1px 3px), linear-gradient(#e2e2e2, #cfcfcf); }

.foot { height: 31px; background: #00593f; color: #fff; border-top: 1px solid #fff; }
.foot div { height: 5px; border-bottom: 1px solid #fff; }
.foot p { line-height: 15px; }

/* taskbar */
.taskbar { display: flex; height: 40px; background: #14170b; color: #fff; }
.start { width: 48px; display: grid; place-items: center; }
.search { display: flex; align-items: center; width: 344px; background: #f1f1f1; color: #333; padding: 0 15px 0 9px; font-size: 15px; letter-spacing: -.55px; }
.search span { margin-left: 9px; }
.mic { margin-left: auto; }
.ti { width: 49px; height: 40px; display: grid; place-items: center; position: relative; flex: none; }
.run::after { content: ""; position: absolute; left: 5px; right: 4px; bottom: 0; height: 2px; background: #72b1e6; }
.cur { background: #414239; }
.cur::after { left: 0; right: 0; }
.avast b { position: absolute; left: 20px; top: 9px; font-size: 15px; line-height: 18px; }
.tray { display: flex; align-items: center; margin-left: auto; }
.tray svg { margin-right: 17px; }
.tray .wifi { margin-right: 8px; }
.clock { width: 62px; text-align: center; font-size: 12.500px; line-height: 18px; letter-spacing: -.5px; }
.tray .nt { margin: 0 0 0 13px; }
.desk { width: 1px; height: 40px; background: #777; margin: 0 4px 0 20px; }
```
